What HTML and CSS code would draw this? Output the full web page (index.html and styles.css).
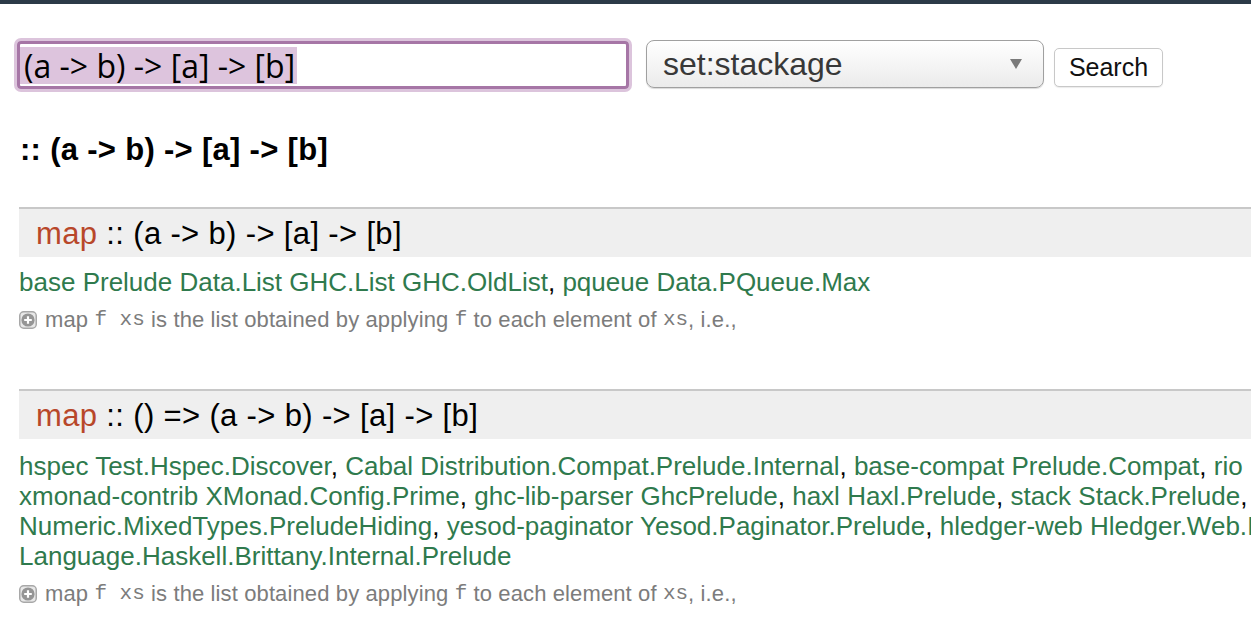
FILE: index.html
```html
<!DOCTYPE html>
<html>
<head>
<meta charset="utf-8">
<title>Hoogle</title>
<link rel="stylesheet" href="styles.css">
</head>
<body>
<div class="topbar"></div>
<div class="page">
  <form class="search">
    <div class="query"><span class="sel">(a -&gt; b) -&gt; [a] -&gt; [b]</span></div>
    <div class="scope"><span class="scope-text">set:stackage</span><span class="arrow"></span></div>
    <button type="button" class="btn">Search</button>
  </form>

  <h1 class="sig">:: (a -&gt; b) -&gt; [a] -&gt; [b]</h1>

  <div class="result">
    <div class="result-head"><span class="name">map</span> :: (a -&gt; b) -&gt; [a] -&gt; [b]</div>
    <div class="pkgs"><a>base</a> <a>Prelude</a> <a>Data.List</a> <a>GHC.List</a> <a>GHC.OldList</a>, <a>pqueue</a> <a>Data.PQueue.Max</a></div>
    <div class="doc"><svg class="plus" width="18" height="18" viewBox="0 0 18 18"><rect x="0.75" y="0.75" width="16.5" height="16.5" rx="4" fill="#e8e8e8" stroke="#a8a8a8" stroke-width="1.5"/><circle cx="9" cy="9" r="6.6" fill="#959595"/><path d="M9 5.2v7.6M5.2 9h7.6" stroke="#fff" stroke-width="2.2"/></svg><span>map </span><code>f xs</code><span> is the list obtained by applying </span><code>f</code><span> to each element of </span><code>xs</code><span>, i.e.,</span></div>
  </div>

  <div class="result second">
    <div class="result-head"><span class="name">map</span> :: () =&gt; (a -&gt; b) -&gt; [a] -&gt; [b]</div>
    <div class="pkgs"><a>hspec</a> <a>Test.Hspec.Discover</a>, <a>Cabal</a> <a>Distribution.Compat.Prelude.Internal</a>, <a>base-compat</a> <a>Prelude.Compat</a>, <a>rio</a> <a>RIO.Prelude</a>,<br><a>xmonad-contrib</a> <a>XMonad.Config.Prime</a>, <a>ghc-lib-parser</a> <a>GhcPrelude</a>, <a>haxl</a> <a>Haxl.Prelude</a>, <a>stack</a> <a>Stack.Prelude</a>, <a>mixed-types-num</a><br><a>Numeric.MixedTypes.PreludeHiding</a>, <a>yesod-paginator</a> <a>Yesod.Paginator.Prelude</a>, <a>hledger-web</a> <a>Hledger.Web.Import</a>, <a>brittany</a><br><a>Language.Haskell.Brittany.Internal.Prelude</a></div>
    <div class="doc"><svg class="plus" width="18" height="18" viewBox="0 0 18 18"><rect x="0.75" y="0.75" width="16.5" height="16.5" rx="4" fill="#e8e8e8" stroke="#a8a8a8" stroke-width="1.5"/><circle cx="9" cy="9" r="6.6" fill="#959595"/><path d="M9 5.2v7.6M5.2 9h7.6" stroke="#fff" stroke-width="2.2"/></svg><span>map </span><code>f xs</code><span> is the list obtained by applying </span><code>f</code><span> to each element of </span><code>xs</code><span>, i.e.,</span></div>
  </div>
</div>
</body>
</html>
```

FILE: styles.css
```css
html, body {
  margin: 0;
  padding: 0;
  overflow: hidden;
  background: #fff;
}
body {
  font-family: "Liberation Sans", Arial, Helvetica, sans-serif;
  color: #000;
}
.topbar {
  height: 4px;
  background: #2c3a48;
}
.page {
  width: 1700px;
  padding-left: 19px;
}
.search {
  display: flex;
  align-items: flex-start;
  margin: 34px 0 0 -5px;
}
.query {
  position: relative;
  box-sizing: border-box;
  width: 618px;
  height: 54px;
  border: 3px solid #dcc4dc;
  border-radius: 7px;
}
.query::before {
  content: "";
  position: absolute;
  inset: 0;
  border: 3px solid #a676a6;
  border-radius: 4px;
}
.query .sel {
  display: inline-block;
  margin: 6px 0 0 3px;
  padding: 0 2px 0 4px;
  background: #ddc4dd;
  font-family: "Open Sans", "Noto Sans", sans-serif;
  font-size: 32px;
  line-height: 37px;
  height: 37px;
  color: #000;
}
.scope {
  box-sizing: border-box;
  width: 398px;
  height: 48px;
  margin: 2px 0 0 14px;
  border: 1px solid #a0a0a0;
  border-radius: 8px;
  background: linear-gradient(#ffffff, #ebebeb);
  box-shadow: 0 1px 1px rgba(0,0,0,0.15);
  display: flex;
  align-items: center;
  justify-content: space-between;
  padding: 0 21px 0 16px;
}
.scope-text {
  font-size: 32px;
  color: #383838;
  line-height: 40px;
}
.arrow {
  width: 0;
  height: 0;
  border-left: 6px solid transparent;
  border-right: 6px solid transparent;
  border-top: 10px solid #7a7a7a;
}
.btn {
  box-sizing: border-box;
  width: 109px;
  height: 39px;
  margin: 10px 0 0 10px;
  padding: 0;
  background: #fff;
  border: 1px solid #c8c8c8;
  border-radius: 5px;
  box-shadow: 0 1px 1px rgba(0,0,0,0.08);
  font-family: "Liberation Sans", Arial, sans-serif;
  font-size: 25px;
  color: #111;
}
.sig {
  margin: 40px 0 0 1px;
  font-size: 31px;
  font-weight: bold;
  line-height: 36px;
  letter-spacing: 0.3px;
}
.result {
  margin-top: 39px;
}
.result.second {
  margin-top: 56px;
}
.result-head {
  border-top: 2px solid #c8c8c8;
  background: #efefef;
  height: 48px;
  padding-left: 17px;
  font-size: 31px;
  line-height: 50px;
  letter-spacing: 0.35px;
}
.name {
  color: #b8472a;
}
.pkgs {
  margin-top: 10px;
  font-size: 26px;
  line-height: 30px;
  color: #000;
}
.pkgs a {
  color: #2f7a4d;
}
.second .pkgs {
  margin-top: 12px;
}
.doc {
  margin-top: 10px;
  font-size: 22px;
  line-height: 26px;
  color: #7c7c7c;
  display: flex;
  align-items: center;
  white-space: pre;
  letter-spacing: 0.12px;
}
.plus {
  margin-right: 8px;
  flex: none;
}
.doc code {
  font-family: "Liberation Mono", "Courier New", monospace;
  font-size: 21px;
  letter-spacing: 0;
  color: #7c7c7c;
}
```
